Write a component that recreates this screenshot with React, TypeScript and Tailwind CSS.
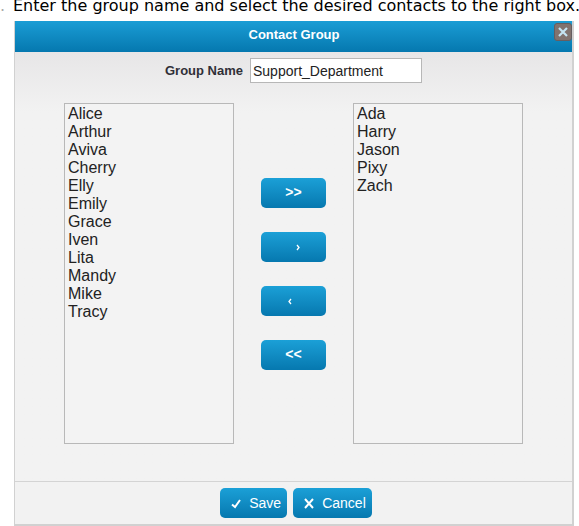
import React from 'react';

interface ContactListProps {
    label: string;
    names: string[];
}

interface BlueButtonProps {
    label?: string;
    className: string;
    children: React.ReactNode;
}

const available = ['Alice', 'Arthur', 'Aviva', 'Cherry', 'Elly', 'Emily', 'Grace', 'Iven', 'Lita', 'Mandy', 'Mike', 'Tracy'];
const selected = ['Ada', 'Harry', 'Jason', 'Pixy', 'Zach'];

const ContactList: React.FC<ContactListProps> = ({ label, names }) => {
    return (
        <select
            multiple
            aria-label={label}
            className="h-[341px] w-[170px] appearance-none overflow-hidden border border-[#b8b8b8] bg-[#f3f3f3] px-px py-px text-[16px] text-[#222] outline-none"
        >
            {names.map((name) => (
                <option key={name} className="block h-[18px] min-h-0 px-[2px] py-0 leading-[18px]">{name}</option>
            ))}
        </select>
    );
};

const BlueButton: React.FC<BlueButtonProps> = ({ label, className, children }) => {
    return (
        <button
            type="button"
            aria-label={label}
            className={`flex h-[30px] items-center rounded-[5px] bg-linear-to-b from-[#1ba0d7] to-[#0678af] text-white ${className}`}
        >
            {children}
        </button>
    );
};

const App: React.FC = () => {
    return (
        <main className="bg-white pb-[2px] font-['Liberation_Sans',Arial,sans-serif]">
            <div className="flex h-[21px] items-start whitespace-nowrap font-['DejaVu_Sans',Verdana,sans-serif] text-[16px] leading-[12px] text-black">
                <span className="w-[13px] shrink-0 text-[#aaa]">.</span>
                <p>Enter the group name and select the desired contacts to the right box.</p>
            </div>
            <section className="mr-[5px] ml-[14px] border-r-2 border-b-2 border-l border-[#d1d1d1] bg-[#f2f2f2]">
                <header className="flex h-[31px] items-center bg-linear-to-b from-[#1a9dd5] to-[#0578af] pl-[19px]">
                    <h1 className="flex-1 pb-[4px] text-center text-[13px] leading-[18px] font-bold text-white">Contact Group</h1>
                    <button
                        type="button"
                        aria-label="Close"
                        className="mb-[10px] flex size-[18px] items-center justify-center rounded-[3px] border border-[#665e61] bg-[#81736f]"
                    >
                        <svg width="10" height="10" viewBox="0 0 10 10" stroke="#c5e4f2" strokeWidth="2.2">
                            <path d="M1 1l8 8M9 1L1 9" />
                        </svg>
                    </button>
                </header>
                <div className="bg-linear-to-b from-[#e7e6e7] to-[#f2f2f2] to-[60px] pt-[6px]">
                    <div className="flex items-center justify-center gap-[7px]">
                        <label htmlFor="group-name" className="text-[13px] leading-[18px] font-bold text-[#303038]">Group Name</label>
                        <input
                            id="group-name"
                            type="text"
                            defaultValue="Support_Department"
                            className="h-[25px] w-[172px] border border-[#b7b7b7] bg-white px-[2px] text-[14px] text-[#222] outline-none"
                        />
                    </div>
                    <div className="flex items-center justify-center gap-[27px] pt-[20px] pb-[37px]">
                        <ContactList label="Available contacts" names={available} />
                        <div className="flex flex-col gap-6">
                            <BlueButton className="w-[65px] justify-center text-[14px] font-bold">&gt;&gt;</BlueButton>
                            <BlueButton label="Add contact" className="w-[65px] justify-center pl-[8px]">
                                <svg width="6" height="8" viewBox="0 0 6 8" fill="none" stroke="white" strokeWidth="1.3">
                                    <path d="M2 2l2 2.5L2 7" />
                                </svg>
                            </BlueButton>
                            <BlueButton label="Remove contact" className="w-[65px] justify-center pr-[8px]">
                                <svg width="6" height="8" viewBox="0 0 6 8" fill="none" stroke="white" strokeWidth="1.3">
                                    <path d="M4 2L2 4.500l2 2.500" />
                                </svg>
                            </BlueButton>
                            <BlueButton className="w-[65px] justify-center text-[14px] font-bold">&lt;&lt;</BlueButton>
                        </div>
                        <ContactList label="Group contacts" names={selected} />
                    </div>
                </div>
                <footer className="flex justify-center gap-[6px] border-t border-[#d4d4d4] py-[6px] pl-[5px]">
                    <BlueButton className="gap-[7px] pr-[6px] pl-[10px] text-[14px]">
                        <svg width="12" height="12" viewBox="0 0 12 12" fill="none" stroke="white" strokeWidth="2">
                            <path d="M2 7.500l3 2.500L10 3" />
                        </svg>
                        <span>Save</span>
                    </BlueButton>
                    <BlueButton className="gap-[7px] pr-[6px] pl-[10px] text-[14px]">
                        <svg width="12" height="12" viewBox="0 0 12 12" stroke="white" strokeWidth="2">
                            <path d="M2 2l8 9M10 2L2 11" />
                        </svg>
                        <span>Cancel</span>
                    </BlueButton>
                </footer>
            </section>
        </main>
    );
};

export default App;
